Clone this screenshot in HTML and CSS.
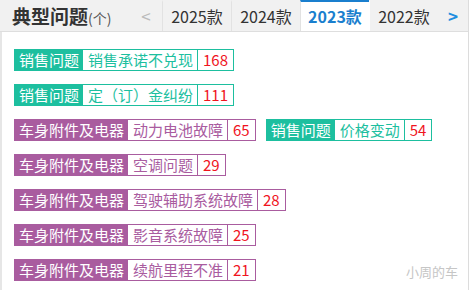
FILE: index.html
```html
<!DOCTYPE html>
<html>
<head lang="zh">
    <meta charset="UTF-8">
    <title>典型问题</title>
    <link rel="stylesheet" href="styles.css">
</head>
<body>
    <div class="panel">
        <div class="head">
            <div class="title">典型问题<span class="unit">(个)</span></div>
            <div class="arrow prev">&lt;</div>
            <div class="tab">2025款</div>
            <div class="tab">2024款</div>
            <div class="tab active">2023款</div>
            <div class="tab">2022款</div>
            <div class="arrow next">&gt;</div>
        </div>
        <div class="list">
            <div class="row">
                <div class="tag green"><span class="cat">销售问题</span><span class="txt">销售承诺不兑现</span><span class="num">168</span></div>
            </div>
            <div class="row">
                <div class="tag green"><span class="cat">销售问题</span><span class="txt">定（订）金纠纷</span><span class="num">111</span></div>
            </div>
            <div class="row">
                <div class="tag purple"><span class="cat">车身附件及电器</span><span class="txt">动力电池故障</span><span class="num">65</span></div>
                <div class="tag green"><span class="cat">销售问题</span><span class="txt">价格变动</span><span class="num">54</span></div>
            </div>
            <div class="row">
                <div class="tag purple"><span class="cat">车身附件及电器</span><span class="txt">空调问题</span><span class="num">29</span></div>
            </div>
            <div class="row">
                <div class="tag purple"><span class="cat">车身附件及电器</span><span class="txt">驾驶辅助系统故障</span><span class="num">28</span></div>
            </div>
            <div class="row">
                <div class="tag purple"><span class="cat">车身附件及电器</span><span class="txt">影音系统故障</span><span class="num">25</span></div>
            </div>
            <div class="row">
                <div class="tag purple"><span class="cat">车身附件及电器</span><span class="txt">续航里程不准</span><span class="num">21</span></div>
            </div>
            <div class="mark">小周的车</div>
        </div>
    </div>
</body>
</html>
```

FILE: styles.css
```css
* {
    margin: 0;
    padding: 0;
    box-sizing: border-box;
}
body {
    font-family: "Noto Sans CJK SC", "Noto Sans", sans-serif;
    background: #fff;
}
.panel {
    width: 469px;
    height: 290px;
    border-right: 1px solid #dcdcdc;
    overflow: hidden;
}
.head {
    display: flex;
    height: 32px;
    background: #f1f1f1;
    border-bottom: 1px solid #dedede;
}
.title {
    width: 130px;
    padding-left: 12px;
    font-size: 19px;
    font-weight: bold;
    color: #333;
    line-height: 31px;
}
.unit {
    font-size: 14px;
    font-weight: normal;
    color: #555;
}
.arrow {
    width: 32px;
    text-align: center;
    font-size: 17px;
    line-height: 31px;
    color: #bbb;
}
.next {
    flex: 1;
    color: #1f8ee0;
    font-weight: bold;
}
.tab {
    width: 69px;
    border-left: 1px solid #e2e2e2;
    border-top: 2px solid transparent;
    text-align: center;
    font-size: 16px;
    line-height: 28px;
    color: #333;
}
.tab.active {
    background: #fff;
    border-top-color: #1a7fce;
    color: #1a7fce;
    font-weight: bold;
}
.tab.active + .tab {
    border-left-color: #fff;
}
.list {
    position: relative;
    height: 258px;
    border-left: 2px solid #e6e6e6;
    padding: 17px 0 0 12px;
}
.row {
    display: flex;
    gap: 10px;
    margin-bottom: 13px;
}
.tag {
    display: flex;
    height: 22px;
    font-size: 15px;
    line-height: 20px;
}
.tag span {
    border: 1px solid;
}
.cat {
    padding: 0 3px 0 4px;
    color: #fff;
}
.txt {
    padding: 0 4px 0 5px;
    border-left: none !important;
    border-right: none !important;
}
.num {
    padding: 0 5px;
    color: #f0141e;
}
.green span {
    border-color: #1dbf9f;
}
.green .cat {
    background: #1dbf9f;
}
.green .txt {
    color: #1dbf9f;
}
.purple span {
    border-color: #a95c9f;
}
.purple .cat {
    background: #a95c9f;
}
.purple .txt {
    color: #a95c9f;
}
.mark {
    position: absolute;
    right: 10px;
    bottom: 9px;
    font-size: 13px;
    color: #c6c6c6;
}
```
